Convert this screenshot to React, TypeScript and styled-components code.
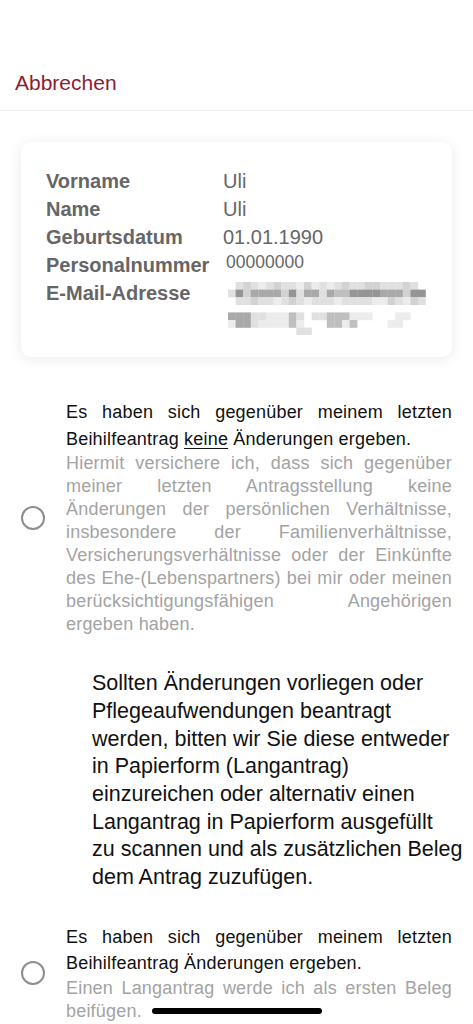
import styled, { createGlobalStyle } from "styled-components";

const GlobalStyle = createGlobalStyle`
  html, body {
    margin: 0;
    padding: 0;
    background: #ffffff;
  }

  body {
    font-family: "Liberation Sans", Arial, sans-serif;
    -webkit-font-smoothing: antialiased;
  }
`;

const StyledScreen = styled.div`
  position: relative;
  height: 100vh;
  overflow: hidden;
  background: #ffffff;
`;

const StyledHeaderBar = styled.header`
  box-sizing: border-box;
  height: 111px;
  padding: 56px 15px 0;
  display: flex;
  align-items: center;
  border-bottom: 1px solid #ececec;
`;

const StyledCancelButton = styled.button`
  background: none;
  border: none;
  padding: 0;
  font-family: inherit;
  font-size: 21px;
  color: #8d1c34;
  cursor: pointer;
`;

const StyledCard = styled.section`
  margin: 31px 21px 0;
  padding: 25px 25px 22px;
  border-radius: 10px;
  background: #ffffff;
  box-shadow: 0 2px 14px rgba(0, 0, 0, 0.09);
`;

const StyledInfoGrid = styled.dl`
  margin: 0;
  display: grid;
  grid-template-columns: 177px 1fr;
  align-items: start;
`;

const StyledLabel = styled.dt`
  font-size: 20px;
  font-weight: 700;
  line-height: 28px;
  color: #666666;
`;

const StyledValue = styled.dd<{ $small?: boolean }>`
  margin: 0;
  font-size: ${(props) => (props.$small ? "17.5px" : "20px")};
  line-height: ${(props) => (props.$small ? "22px" : "28px")};
  padding-left: ${(props) => (props.$small ? "3px" : "0")};
  color: #666666;
`;

const StyledMaskedValue = styled.dd`
  margin: 0;
  padding: 3px 0 0 5px;

  svg {
    display: block;
  }
`;

const StyledOption = styled.label<{ $gap: number }>`
  display: flex;
  align-items: center;
  gap: 21px;
  padding: 0 21px;
  margin-top: ${(props) => props.$gap}px;
  cursor: pointer;
`;

const StyledRadio = styled.span`
  box-sizing: border-box;
  flex-shrink: 0;
  width: 24px;
  height: 24px;
  border: 2px solid #8e8e8e;
  border-radius: 50%;
`;

const StyledOptionText = styled.div`
  flex: 1;
  text-align: justify;
  letter-spacing: 0.2px;
`;

const StyledOptionTitle = styled.div`
  font-size: 18px;
  line-height: 26.5px;
  color: #111111;

  u {
    text-decoration-thickness: 1px;
    text-underline-offset: 3px;
  }
`;

const StyledOptionHint = styled.div`
  font-size: 18px;
  line-height: 23px;
  color: #a3a3a3;
`;

const StyledNotice = styled.p`
  margin: 34px 0 0;
  padding: 0 8px 0 92px;
  font-size: 21.5px;
  line-height: 27.7px;
  color: #111111;
`;

const StyledHomeIndicator = styled.div`
  position: absolute;
  left: 50%;
  bottom: 10px;
  width: 170px;
  height: 6px;
  border-radius: 3px;
  background: #000000;
  transform: translateX(-50%);
`;

// pixelated e-mail address, one char per cell, 0 = empty
const MASK_ROWS = [
  "02321232213121232233222320",
  "26355553625525446666555366",
  "02232212321222122221132132",
  "00000000000000000000000000",
  "55522111420224441110001100",
  "15521111410004414000011000",
  "00000000022000000000000000",
];

const MASK_SHADES = ["", "#ececec", "#e0e0e0", "#d2d2d2", "#bfbfbf", "#a9a9a9", "#959595"];

const CELL_W = 7.6;
const CELL_H = 7.6;

const MaskedEmail = () => (
  <svg width={26 * CELL_W} height={MASK_ROWS.length * CELL_H}>
    {MASK_ROWS.map((row, y) =>
      row.split("").map((c, x) =>
        c === "0" ? null : (
          <rect
            key={`${x}-${y}`}
            x={x * CELL_W}
            y={y * CELL_H}
            width={CELL_W + 0.2}
            height={CELL_H + 0.2}
            fill={MASK_SHADES[Number(c)]}
          />
        )
      )
    )}
  </svg>
);

const notice = [
  "Sollten Änderungen vorliegen oder",
  "Pflegeaufwendungen beantragt",
  "werden, bitten wir Sie diese entweder",
  "in Papierform (Langantrag)",
  "einzureichen oder alternativ einen",
  "Langantrag in Papierform ausgefüllt",
  "zu scannen und als zusätzlichen Beleg",
  "dem Antrag zuzufügen.",
];

const App = () => {
  return (
    <>
      <GlobalStyle />
      <StyledScreen>
        <StyledHeaderBar>
          <StyledCancelButton>Abbrechen</StyledCancelButton>
        </StyledHeaderBar>

        <StyledCard>
          <StyledInfoGrid>
            <StyledLabel>Vorname</StyledLabel>
            <StyledValue>Uli</StyledValue>
            <StyledLabel>Name</StyledLabel>
            <StyledValue>Uli</StyledValue>
            <StyledLabel>Geburtsdatum</StyledLabel>
            <StyledValue>01.01.1990</StyledValue>
            <StyledLabel>Personalnummer</StyledLabel>
            <StyledValue $small>00000000</StyledValue>
            <StyledLabel>E-Mail-Adresse</StyledLabel>
            <StyledMaskedValue>
              <MaskedEmail />
            </StyledMaskedValue>
          </StyledInfoGrid>
        </StyledCard>

        <StyledOption $gap={42}>
          <StyledRadio />
          <StyledOptionText>
            <StyledOptionTitle>
              Es haben sich gegenüber meinem letzten Beihilfeantrag <u>keine</u>{" "}
              Änderungen ergeben.
            </StyledOptionTitle>
            <StyledOptionHint>
              Hiermit versichere ich, dass sich gegenüber meiner letzten
              Antragsstellung keine Änderungen der persönlichen Verhältnisse,
              insbesondere der Familienverhältnisse, Versicherungsverhältnisse
              oder der Einkünfte des Ehe-(Lebenspartners) bei mir oder meinen
              berücksichtigungsfähigen Angehörigen ergeben haben.
            </StyledOptionHint>
          </StyledOptionText>
        </StyledOption>

        <StyledNotice>
          {notice.map((line, i) => (
            <span key={i}>
              {line}
              {i < notice.length - 1 && <br />}
            </span>
          ))}
        </StyledNotice>

        <StyledOption $gap={32}>
          <StyledRadio />
          <StyledOptionText>
            <StyledOptionTitle>
              Es haben sich gegenüber meinem letzten Beihilfeantrag Änderungen
              ergeben.
            </StyledOptionTitle>
            <StyledOptionHint>
              Einen Langantrag werde ich als ersten Beleg beifügen.
            </StyledOptionHint>
          </StyledOptionText>
        </StyledOption>

        <StyledHomeIndicator />
      </StyledScreen>
    </>
  );
};

export default App;
